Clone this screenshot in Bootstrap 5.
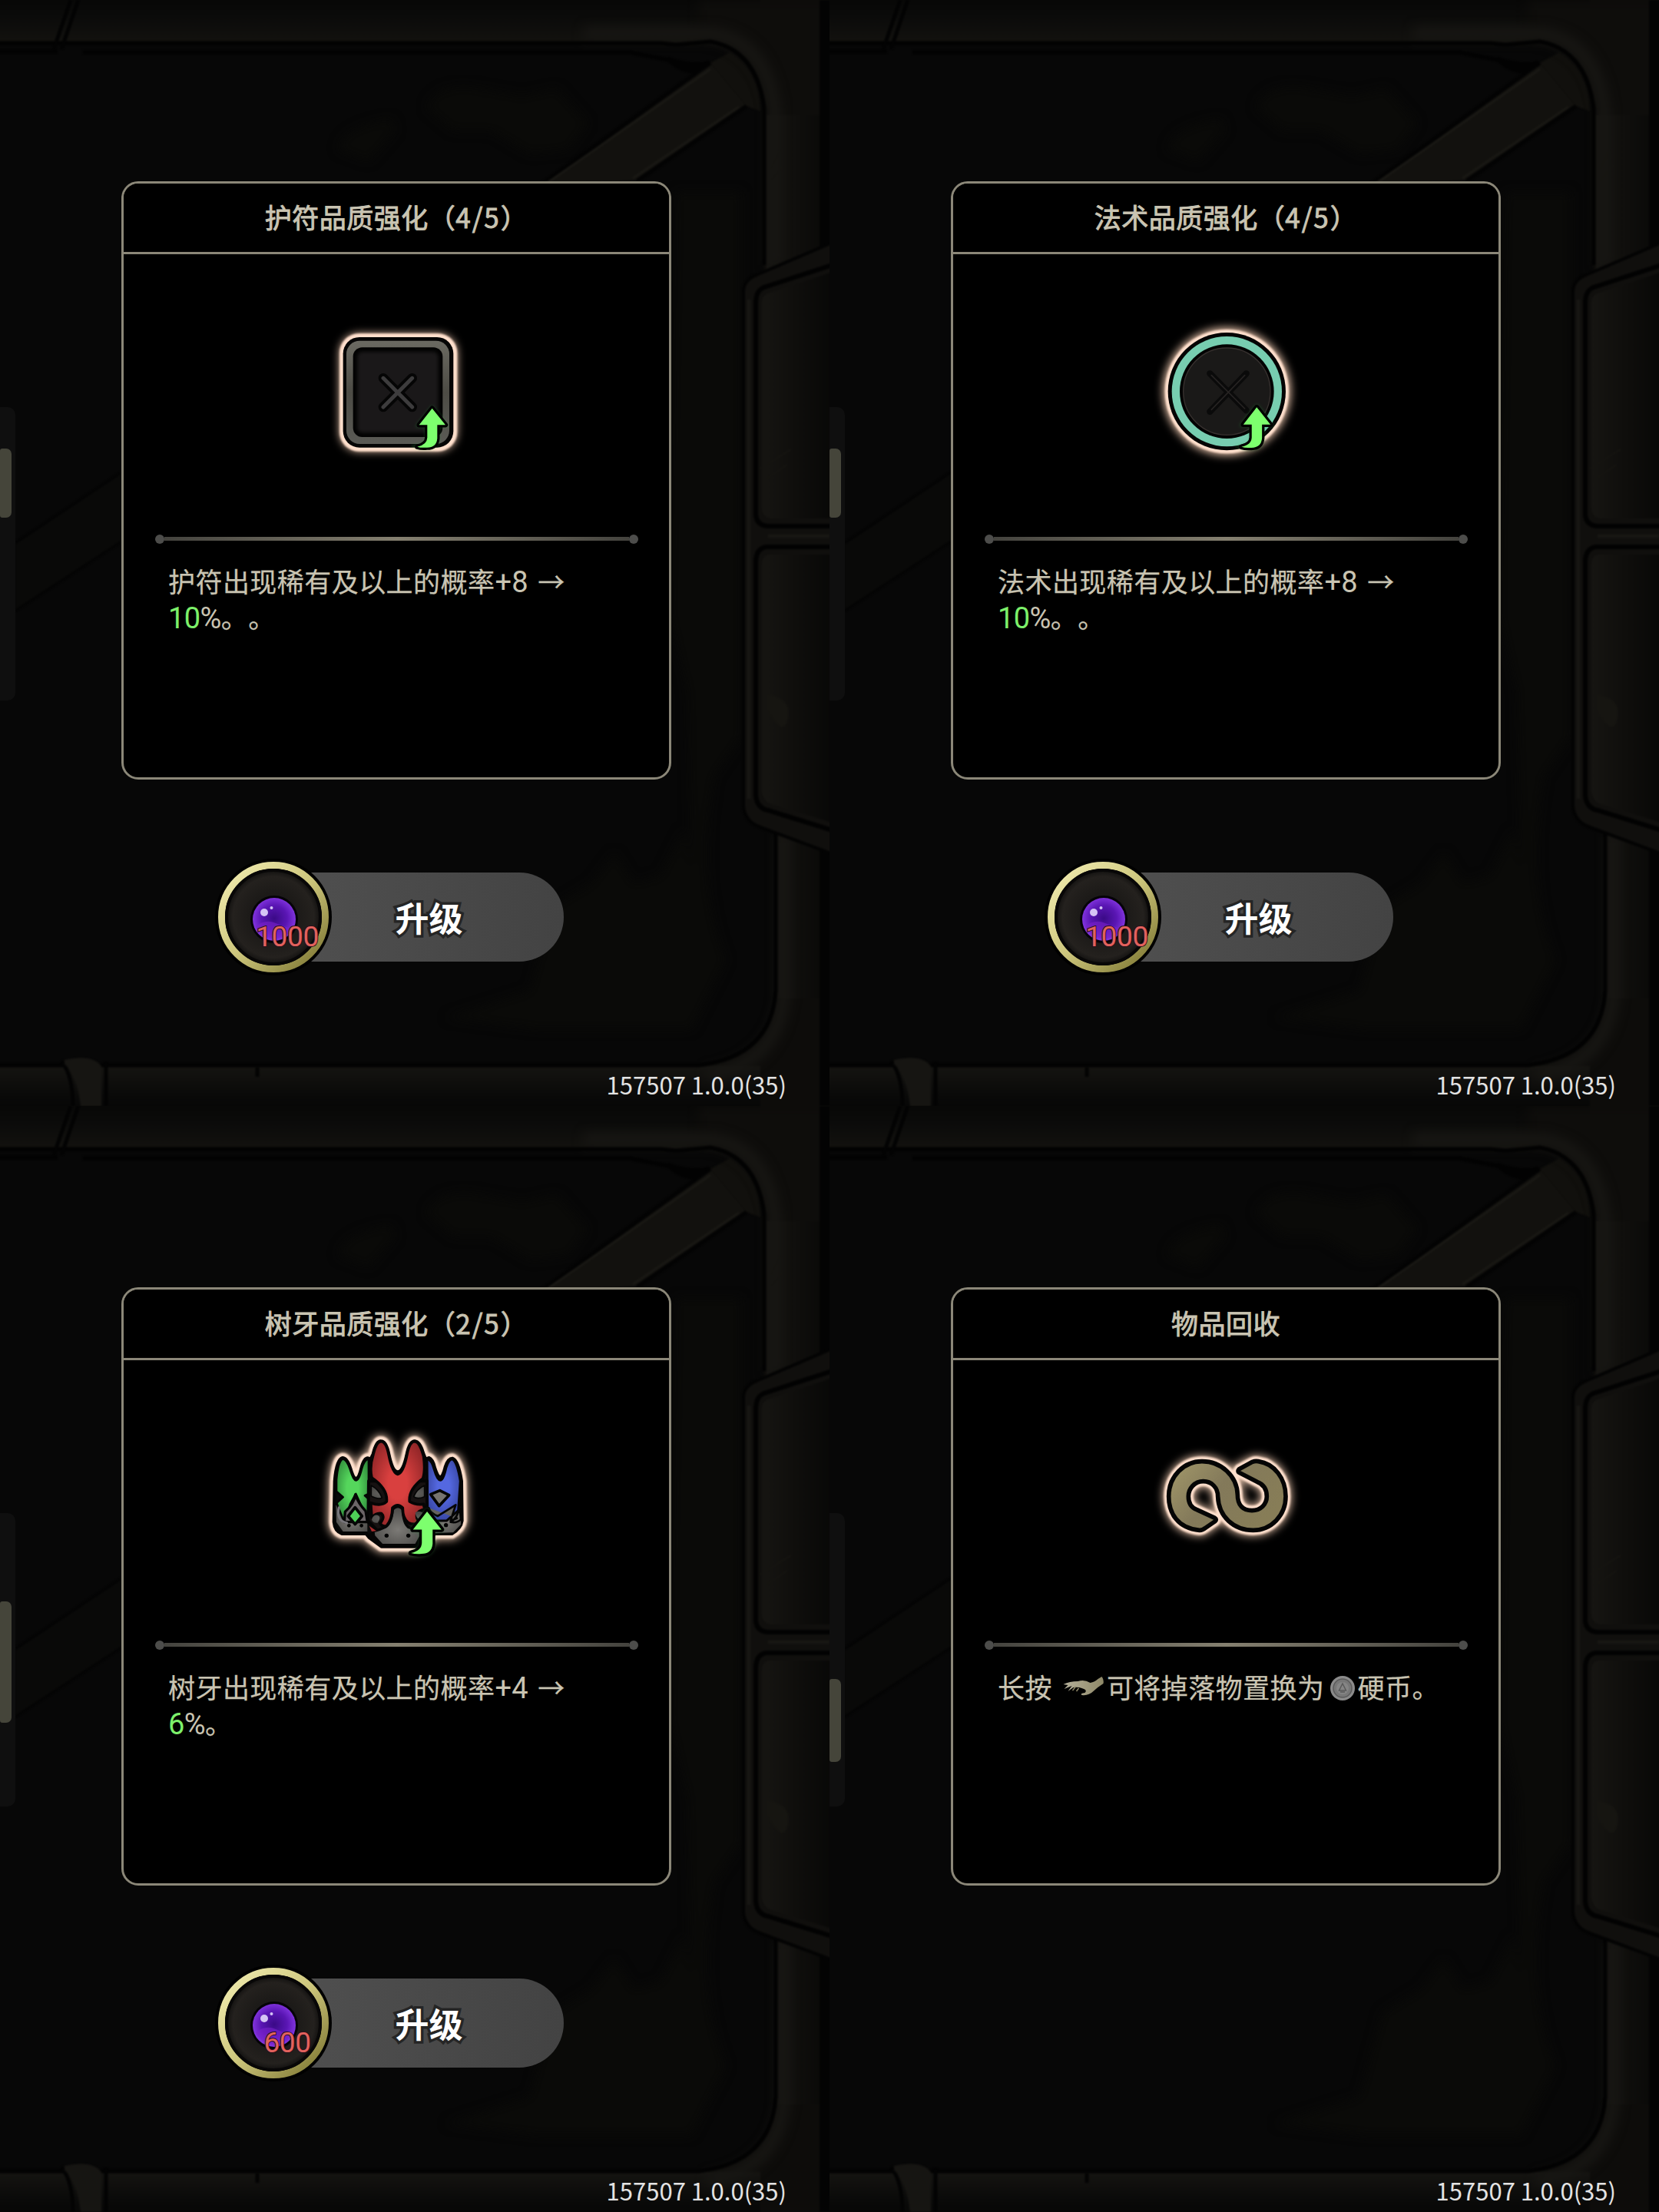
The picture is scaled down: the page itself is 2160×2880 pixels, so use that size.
<!DOCTYPE html>
<html lang="zh-CN">
<head>
    <meta charset="UTF-8">
    <meta name="viewport" content="width=device-width, initial-scale=1">
    <title>升级</title>
    <link href="https://cdn.jsdelivr.net/npm/bootstrap@5.3.0/dist/css/bootstrap.min.css" rel="stylesheet">
    <style>
        body {
            background-color: #070707;
            font-family: "Noto Sans CJK SC", "Noto Sans", sans-serif;
            color: #c9c4b2;
        }
        .screens {
            width: 2160px;
        }
        .screen {
            height: 1440px;
            background: #070707;
        }
        .scene {
            z-index: 0;
        }
        .screen-main {
            z-index: 1;
            padding: 236px 56px 0 138px;
        }
        /* Полоса прокрутки слева */
        .track {
            z-index: 1;
            width: 20px;
            height: 382px;
            margin-top: 530px;
            background: #0f0f0f;
            border-radius: 0 10px 10px 0;
        }
        .thumb {
            width: 15px;
            height: 90px;
            margin-top: 54px;
            background: #45453a;
            border-radius: 3px 7px 7px 3px;
        }
        .thumb-mid {
            height: 158px;
            margin-top: 115px;
        }
        .thumb-low {
            height: 108px;
            margin-top: 216px;
        }
        .item-card {
            --bs-card-bg: #000;
            --bs-card-color: #c9c4b2;
            --bs-card-border-color: #8b8778;
            --bs-card-border-width: 3px;
            --bs-card-border-radius: 22px;
            --bs-card-inner-border-radius: 19px;
            --bs-card-cap-bg: #000;
            width: 716px;
            height: 779px;
        }
        .item-card .card-header {
            height: 92px;
            font-size: 35px;
            line-height: 86px;
            letter-spacing: .5px;
            -webkit-text-stroke: .9px #c9c4b2;
        }
        .title-num {
            letter-spacing: 2px;
        }
        .item-icon {
            width: 240px;
            height: 240px;
            margin-top: 60px;
        }
        .divider {
            height: 13px;
            margin: 64px 40px 0 41px;
        }
        .divider .dot {
            width: 12px;
            height: 12px;
            background: #4d4d4b;
        }
        .divider .rule {
            height: 5px;
            background: linear-gradient(90deg, #44433e, #858070 50%, #44433e);
        }
        .desc {
            margin: 24px 0 0 58px;
            font-size: 35px;
            line-height: 47px;
            letter-spacing: .45px;
            text-spacing-trim: space-all;
            -webkit-text-stroke: .25px #c9c4b2;
        }
        .num {
            font-family: Roboto, "Noto Sans", sans-serif;
            font-size: 38px;
            line-height: 1;
            letter-spacing: -.6px;
            -webkit-text-stroke: 0;
        }
        .gain {
            margin-right: 4px;
            letter-spacing: .3px;
        }
        .up {
            color: #7df06a;
        }
        .upgrade {
            height: 152px;
            margin: 103px 0 0 122px;
        }
        .cost {
            width: 152px;
            height: 152px;
            z-index: 2;
        }
        .btn-upgrade {
            --bs-btn-color: #fff;
            width: 365px;
            height: 116px;
            margin-left: -63px;
            padding: 0 0 0 14px;
            border: 0;
            border-radius: 0 58px 58px 0;
            background: linear-gradient(90deg, #505050, #434343);
            font-size: 44px;
            font-weight: 700;
            color: #fff;
            -webkit-text-stroke: 7px #252525;
            paint-order: stroke fill;
        }
        .version {
            font-size: 31px;
            line-height: 50px;
            color: #e3e3e3;
            margin-bottom: 3px;
        }
        .price {
            font: 400 37px Roboto, "Noto Sans", sans-serif;
            letter-spacing: -.4px;
        }
    </style>
</head>
<body>

    <!-- Общие рисунки -->
    <svg width="0" height="0" class="position-absolute">
        <defs>
            <filter id="glow" x="-30%" y="-30%" width="160%" height="160%" color-interpolation-filters="sRGB"><feGaussianBlur stdDeviation="18"/></filter>
            <filter id="soft" x="-20%" y="-20%" width="140%" height="140%" color-interpolation-filters="sRGB"><feGaussianBlur stdDeviation="7"/></filter>
            <filter id="haze" x="0" y="0" width="100%" height="100%" color-interpolation-filters="sRGB"><feGaussianBlur stdDeviation="1.300"/></filter>
            <filter id="rim" x="-20%" y="-20%" width="140%" height="140%" color-interpolation-filters="sRGB"><feGaussianBlur stdDeviation="2.500"/></filter>
            <linearGradient id="beamTop" x2="0" y2="1"><stop stop-color="#070706"/><stop offset=".45" stop-color="#0b0b0a"/><stop offset="1" stop-color="#13120f"/></linearGradient>
            <linearGradient id="beamBottom" x2="0" y2="1"><stop stop-color="#151411"/><stop offset=".6" stop-color="#0a0a09"/><stop offset="1" stop-color="#050505"/></linearGradient>
            <linearGradient id="beamSide"><stop stop-color="#161512"/><stop offset=".45" stop-color="#0f0e0c"/><stop offset="1" stop-color="#070706"/></linearGradient>
            <linearGradient id="gold" x1="0" y1="0" x2="1" y2="1"><stop stop-color="#f4efb4"/><stop offset=".5" stop-color="#cdc67c"/><stop offset="1" stop-color="#77702c"/></linearGradient>
            <radialGradient id="orb" cx=".5" cy=".48" r=".55"><stop stop-color="#3a0a86"/><stop offset=".55" stop-color="#5a16b4"/><stop offset="1" stop-color="#8b3be8"/></radialGradient>
            <radialGradient id="well"><stop offset=".5" stop-color="#1c1a18"/><stop offset=".85" stop-color="#24211e"/><stop offset="1" stop-color="#100f0e"/></radialGradient>
            <linearGradient id="frame" x2="0" y2="1"><stop stop-color="#6b6a62"/><stop offset=".5" stop-color="#4d4c45"/><stop offset="1" stop-color="#5a5a55"/></linearGradient>
            <radialGradient id="redTooth" cx=".5" cy=".5" r=".6"><stop offset=".3" stop-color="#d9403f"/><stop offset="1" stop-color="#8d2426"/></radialGradient>
            <radialGradient id="greenTooth" cx=".5" cy=".45" r=".6"><stop offset=".3" stop-color="#55d65c"/><stop offset="1" stop-color="#2f8a3b"/></radialGradient>
            <radialGradient id="blueTooth" cx=".5" cy=".45" r=".6"><stop offset=".3" stop-color="#5468e0"/><stop offset="1" stop-color="#35439e"/></radialGradient>
            <radialGradient id="stone" cx=".5" cy=".6" r=".6"><stop stop-color="#7c7a76"/><stop offset="1" stop-color="#4a4947"/></radialGradient>
            <linearGradient id="brass" x2="1" y2=".5"><stop stop-color="#a3996a"/><stop offset=".5" stop-color="#83795a"/><stop offset="1" stop-color="#877d57"/></linearGradient>
            <linearGradient id="skin" x2="1"><stop stop-color="#b5b09a"/><stop offset="1" stop-color="#8f8968"/></linearGradient>
        </defs>

        <!-- Каменная рама и балки -->
        <symbol id="scene" viewBox="0 0 1080 1440">
            <rect width="1080" height="1440" fill="#070707"/>
            <path d="M555 140Q570 105 625 115L680 125 725 115 765 160 740 195 690 200 640 170 590 170ZM440 195Q445 165 510 155L515 170 480 210ZM880 250H965V960L930 1010Q905 1150 945 1250L900 1340H700L580 1325 690 1290 720 1180 770 1150 800 1110 825 1150 860 1140 890 1080 900 1130 895 900 872 800Z" fill="#0a0a08" filter="url(#soft)"/>
            <g filter="url(#haze)">
                <path d="M20 707L158 615V705L20 795Z" fill="#090908"/>
                <path d="M20 707L158 615M20 795L158 705" stroke="#040404" stroke-width="3"/>
                <path d="M705 240L925 82 972 138 828 235Z" fill="#12110e"/>
                <path d="M705 240L925 82M830 235L972 138" stroke="#030303" stroke-width="5"/>
                <path d="M710 240L925 90M824 232L962 139" stroke="#191814" stroke-width="3"/>
                <path d="M925 82L950 68Q988 90 990 145L972 138Z" fill="#11100d"/>
                <path d="M-10 -10H1090V1450H-10V1386H910Q1000 1375 1008 1300V1080L985 1060V360L995 350V140Q985 60 925 55L-10 56Z" fill="#0d0c0a"/>
                <rect x="-10" y="-6" width="1000" height="62" fill="url(#beamTop)"/>
                <rect x="-10" y="1388" width="1000" height="62" fill="url(#beamBottom)"/>
                <path d="M910 0H1090V350H998V140Q985 60 910 52Z" fill="#0e0d0b" filter="url(#soft)"/>
                <path d="M998 150V350H1090V150ZM1012 1080H1090V1300H1012Z" fill="url(#beamSide)"/>
                <path d="M760 44H925Q995 52 1008 140V345M1020 1085V1300Q1010 1385 920 1400" fill="none" stroke="#171613" stroke-width="18" filter="url(#soft)"/>
                <path d="M1080 0V340M1080 1090V1440" stroke="#030303" stroke-width="26"/>
                <path d="M-10 56H860L880 58 925 54Q985 65 995 140V345M-10 67H75M108 68H820L870 78 895 90 922 82M1010 1080V1290Q1005 1375 910 1387H-10" fill="none" stroke="#020202" stroke-width="5"/>
                <path d="M870 74Q895 84 925 80L905 96Q885 95 870 80Z" fill="#020202"/>
                <path d="M70 64L92 0M80 64L102 0M80 1382Q95 1400 95 1440M138 1382V1440M335 1390V1402" fill="none" stroke="#030303" stroke-width="5"/>
                <path d="M84 1380Q120 1372 132 1388V1440H105Q100 1400 84 1385Z" fill="#161512"/>
                <path d="M1090 313L985 358Q968 365 968 380V1050Q970 1070 990 1077L1090 1114Z" fill="#100f0d"/>
                <path d="M1090 313L985 358Q968 365 968 380V1050Q970 1070 990 1077L1090 1114" fill="none" stroke="#030303" stroke-width="4"/>
                <path d="M1090 343L995 374Q984 378 984 395V670Q985 684 1000 685H1090M1090 712H998Q984 714 984 732V1035Q985 1052 1000 1055L1090 1083" fill="none" stroke="#020202" stroke-width="6"/>
                <path d="M1090 352L1000 382Q992 385 992 395V660Q993 675 1005 675H1090ZM1090 722H1000Q992 724 992 737V1030Q995 1045 1005 1047L1090 1073Z" fill="url(#beamSide)"/>
                <path d="M975 390V1040M1000 698H1080" stroke="#171613" stroke-width="5"/>
                <path d="M1000 905Q1030 910 1025 935T1000 925ZM990 610L1030 585M995 625L1025 605M1004 220L1015 195M1004 235L1020 215" fill="#161511" stroke="#161511" stroke-width="2"/>
            </g>
        </symbol>

        <symbol id="orbBadge" viewBox="0 0 152 152">
            <circle cx="76" cy="76" r="76" fill="#000"/>
            <circle cx="76" cy="76" r="62" fill="url(#well)"/>
            <circle cx="76" cy="76" r="67.500" fill="none" stroke="url(#gold)" stroke-width="9"/>
            <circle cx="76" cy="76" r="61" fill="none" stroke="#080707" stroke-width="4"/>
            <circle cx="77" cy="79" r="31" fill="#050308"/>
            <circle cx="77" cy="79" r="28" fill="url(#orb)"/>
            <path d="M53 88Q66 78 79 84T101 90A27 27 0 0 1 53 88Z" fill="#7a22cc" opacity=".6"/>
            <circle cx="64" cy="70" r="5" fill="#d5c4f5"/>
            <circle cx="73.500" cy="64" r="2" fill="#d5c4f5"/>
        </symbol>

        <g id="arrow">
            <path d="M428 338L480 403H448V455Q445 491 408 491Q385 493 370 488Q408 480 409 452V403H377Z" fill="#2dbb4b" stroke="#2dbb4b" stroke-width="14" opacity=".35" filter="url(#soft)"/>
            <path d="M428 338L480 403H448V455Q445 491 408 491Q385 493 370 488Q408 480 409 452V403H377Z" fill="#7dff6e" stroke="#000" stroke-width="19" stroke-linejoin="round" paint-order="stroke"/>
        </g>

        <path id="band" d="M215 367C130 360 95 300 95 235C95 155 155 98 225 98C300 98 362 155 364 228C364 270 385 290 420 290C455 290 478 265 478 235C478 205 465 187 440 178L370 142Q362 136 370 128L422 100Q432 96 445 98C508 107 552 165 552 235C552 310 495 367 425 367C350 367 290 315 287 235C287 200 262 176 230 176C195 176 172 205 172 235C172 265 185 280 205 287L275 319Q285 325 275 333L240 357Q225 368 215 367Z"/>

        <path id="teeth" d="M108 145Q125 145 138 185Q150 225 160 226Q172 226 182 185Q192 145 207 146L218 150 228 130Q240 78 258 80Q278 80 288 130Q303 200 323 200Q345 200 360 130Q370 80 390 80Q410 82 422 125L432 150 445 145Q460 150 468 185Q480 220 490 220Q500 220 510 180Q520 147 537 147Q560 155 572 235L574 390Q570 420 535 440L470 440 400 490H260L212 455 200 440H105Q78 430 75 395L78 235Q85 150 108 145Z"/>
    </svg>

    <div class="screens row g-0">

        <div class="col-6 screen position-relative d-flex overflow-hidden">
            <svg class="scene position-absolute top-0 start-0 w-100 h-100"><use href="#scene"/></svg>
            <div class="track position-relative flex-shrink-0"><div class="thumb float-start"></div></div>
            <div class="screen-main position-relative flex-grow-1 d-flex flex-column">
                <div class="card item-card">
                    <div class="card-header text-center p-0">护符品质强化（<span class="title-num">4/5</span>）</div>
                    <div class="card-body p-0">
                        <svg class="item-icon d-block mx-auto overflow-visible" viewBox="0 0 240 240">
                            <g transform="translate(24 28) scale(.3333)">
                                <rect x="68" y="48" width="456" height="456" rx="74" fill="#f3cdb4" filter="url(#glow)"/>
                                <rect x="66" y="46" width="460" height="460" rx="76" fill="#ffdfcc" filter="url(#rim)"/>
                                <rect x="80" y="60" width="431" height="431" rx="64" fill="#050505"/>
                                <rect x="93" y="74" width="402" height="403" rx="52" fill="url(#frame)"/>
                                <rect x="119" y="100" width="350" height="350" rx="36" fill="#030303"/>
                                <rect x="136" y="117" width="316" height="316" rx="20" fill="#1a1819" filter="url(#soft)"/>
                                <path d="M237 220L350 333M350 220L237 333" stroke="#050505" stroke-width="38" stroke-linecap="round"/>
                                <path d="M237 220L350 333M350 220L237 333" stroke="#3d3c3d" stroke-width="15" stroke-linecap="round"/>
                                <use href="#arrow"/>
                            </g>
                        </svg>
                        <div class="divider d-flex align-items-center"><span class="dot rounded-circle"></span><span class="rule flex-grow-1"></span><span class="dot rounded-circle"></span></div>
                        <div class="desc text-nowrap">护符出现稀有及以上的概率<span class="num gain">+8</span> →<br><span class="num up">10</span><span class="num">%</span>。。</div>
                    </div>
                </div>
                <div class="upgrade d-flex align-items-center">
                    <svg class="cost position-relative overflow-visible"><use href="#orbBadge"/><text class="price" x="94" y="114" text-anchor="middle" fill="#e2625d" stroke="#2a0f1a" stroke-width="2" paint-order="stroke">1000</text></svg>
                    <button type="button" class="btn btn-upgrade">升级</button>
                </div>
                <div class="version mt-auto text-end">157507 1.0.0(35)</div>
            </div>
        </div>

        <div class="col-6 screen position-relative d-flex overflow-hidden">
            <svg class="scene position-absolute top-0 start-0 w-100 h-100"><use href="#scene"/></svg>
            <div class="track position-relative flex-shrink-0"><div class="thumb float-start"></div></div>
            <div class="screen-main position-relative flex-grow-1 d-flex flex-column">
                <div class="card item-card">
                    <div class="card-header text-center p-0">法术品质强化（<span class="title-num">4/5</span>）</div>
                    <div class="card-body p-0">
                        <svg class="item-icon d-block mx-auto overflow-visible" viewBox="0 0 240 240">
                            <g transform="translate(24 19) scale(.3333)">
                                <circle cx="292" cy="299" r="248" fill="#f3cdb4" filter="url(#glow)"/>
                                <circle cx="292" cy="299" r="242" fill="#ffdfcc" filter="url(#rim)"/>
                                <circle cx="292" cy="299" r="230" fill="#040404"/>
                                <circle cx="292" cy="299" r="215" fill="#77cdb0"/>
                                <circle cx="292" cy="299" r="184" fill="#030303"/>
                                <circle cx="292" cy="299" r="170" fill="#1a1918" stroke="#37312f" stroke-width="4"/>
                                <path d="M226 229L368 373M368 229L226 378" stroke="#0a0a0a" stroke-width="25" stroke-linecap="round"/>
                                <path d="M232 236L362 366M362 236L232 370" stroke="#262322" stroke-width="5" stroke-linecap="round"/>
                                <use href="#arrow" transform="translate(-32 13) scale(1.03)"/>
                            </g>
                        </svg>
                        <div class="divider d-flex align-items-center"><span class="dot rounded-circle"></span><span class="rule flex-grow-1"></span><span class="dot rounded-circle"></span></div>
                        <div class="desc text-nowrap">法术出现稀有及以上的概率<span class="num gain">+8</span> →<br><span class="num up">10</span><span class="num">%</span>。。</div>
                    </div>
                </div>
                <div class="upgrade d-flex align-items-center">
                    <svg class="cost position-relative overflow-visible"><use href="#orbBadge"/><text class="price" x="94" y="114" text-anchor="middle" fill="#e2625d" stroke="#2a0f1a" stroke-width="2" paint-order="stroke">1000</text></svg>
                    <button type="button" class="btn btn-upgrade">升级</button>
                </div>
                <div class="version mt-auto text-end">157507 1.0.0(35)</div>
            </div>
        </div>

        <div class="col-6 screen position-relative d-flex overflow-hidden">
            <svg class="scene position-absolute top-0 start-0 w-100 h-100"><use href="#scene"/></svg>
            <div class="track position-relative flex-shrink-0"><div class="thumb thumb-mid float-start"></div></div>
            <div class="screen-main position-relative flex-grow-1 d-flex flex-column">
                <div class="card item-card">
                    <div class="card-header text-center p-0">树牙品质强化（<span class="title-num">2/5</span>）</div>
                    <div class="card-body p-0">
                        <svg class="item-icon d-block mx-auto overflow-visible" viewBox="0 0 240 240">
                            <g transform="translate(14 19) scale(.3333)" stroke-linejoin="round" stroke-linecap="round">
                                <use href="#teeth" fill="#f3cdb4" stroke="#f3cdb4" stroke-width="44" filter="url(#glow)"/>
                                <use href="#teeth" fill="#000" stroke="#ffdfcc" stroke-width="40" filter="url(#rim)"/>
                                <use href="#teeth" fill="#0a0a0a" stroke="#050505" stroke-width="14"/>
                                <!-- зелёный -->
                                <path d="M82 330L84 395 110 432H205V330Z" fill="url(#stone)"/>
                                <path d="M108 148Q125 150 138 190Q150 232 160 232Q172 232 182 190Q192 150 210 148V285L195 292 210 305V400Q195 385 185 340L160 285 138 325 115 395 92 340 85 320 110 298 84 275V230Q90 160 108 148Z" fill="url(#greenTooth)" stroke="#050505" stroke-width="8"/>
                                <path d="M158 288Q168 320 198 352L205 395H115L118 355Q152 325 158 288Z" fill="#6c6568" stroke="#050505" stroke-width="10"/>
                                <path d="M157 338L184 372 157 404 130 372Z" fill="#4ecf57" stroke="#050505" stroke-width="11"/>
                                <path d="M94 338Q82 390 125 398" fill="none" stroke="#77757a" stroke-width="9"/>
                                <circle cx="133" cy="409" r="7"/><circle cx="182" cy="409" r="7"/>
                                <!-- синий -->
                                <path d="M440 330V410L465 438 540 436 570 405V335Z" fill="url(#stone)"/>
                                <path d="M438 148Q456 152 466 190Q478 232 490 232Q502 232 512 185Q522 150 537 149Q556 160 568 235L560 350 515 390H455L440 340Z" fill="url(#blueTooth)" stroke="#050505" stroke-width="9"/>
                                <path d="M452 287L488 272 524 290 485 332Z" fill="#77746f" stroke="#050505" stroke-width="11"/>
                                <path d="M565 330Q560 380 530 395Q555 400 570 385ZM445 340Q450 360 480 372L550 328 530 390 555 380" fill="#64625f" stroke="#050505" stroke-width="8"/>
                                <circle cx="512" cy="407" r="8"/>
                                <!-- красный -->
                                <path d="M210 235H438V440L395 488H262L215 450 240 425 208 390Z" fill="#161111" stroke="#050505" stroke-width="12"/>
                                <path d="M228 432Q255 425 275 415Q300 400 304 345Q325 325 343 345Q345 400 365 415L422 435 395 485H262L230 450Z" fill="url(#stone)" stroke="#050505" stroke-width="10"/>
                                <path d="M258 80Q278 80 288 130Q303 206 323 208Q345 206 360 130Q370 80 390 80Q410 82 425 140Q432 195 422 225Q365 268 370 315Q395 330 425 325L428 345Q405 350 398 365Q395 385 412 395Q390 410 365 398Q342 380 343 340Q323 320 303 340Q302 385 280 410Q262 415 255 400Q275 375 260 362Q240 358 222 378L218 320Q260 335 280 315Q285 265 222 222Q212 180 228 130Q240 80 258 80Z" fill="url(#redTooth)" stroke="#050505" stroke-width="11"/>
                                <path d="M220 252Q250 268 262 300Q250 308 220 294ZM428 252Q398 266 386 296Q400 308 428 296Z" fill="url(#stone)" stroke="#050505" stroke-width="5"/>
                                <path d="M222 385Q228 365 245 368Q262 375 245 398Q225 400 222 385M392 358Q405 350 420 358L415 385Q395 385 392 358" fill="url(#stone)"/>
                                <path d="M212 410L240 430 222 432Z" fill="#a52c2d"/>
                                <circle cx="280" cy="448" r="8"/><circle cx="365" cy="448" r="8"/>
                                <use href="#arrow" transform="translate(-24 -11) scale(1.08)"/>
                            </g>
                        </svg>
                        <div class="divider d-flex align-items-center"><span class="dot rounded-circle"></span><span class="rule flex-grow-1"></span><span class="dot rounded-circle"></span></div>
                        <div class="desc text-nowrap">树牙出现稀有及以上的概率<span class="num gain">+4</span> →<br><span class="num up">6</span><span class="num">%</span>。</div>
                    </div>
                </div>
                <div class="upgrade d-flex align-items-center">
                    <svg class="cost position-relative overflow-visible"><use href="#orbBadge"/><text class="price" x="94" y="114" text-anchor="middle" fill="#e2625d" stroke="#2a0f1a" stroke-width="2" paint-order="stroke">600</text></svg>
                    <button type="button" class="btn btn-upgrade">升级</button>
                </div>
                <div class="version mt-auto text-end">157507 1.0.0(35)</div>
            </div>
        </div>

        <div class="col-6 screen position-relative d-flex overflow-hidden">
            <svg class="scene position-absolute top-0 start-0 w-100 h-100"><use href="#scene"/></svg>
            <div class="track position-relative flex-shrink-0"><div class="thumb thumb-low float-start"></div></div>
            <div class="screen-main position-relative flex-grow-1 d-flex flex-column">
                <div class="card item-card">
                    <div class="card-header text-center p-0">物品回收</div>
                    <div class="card-body p-0">
                        <svg class="item-icon d-block mx-auto overflow-visible" viewBox="0 0 240 240">
                            <g transform="translate(14 39) scale(.3333)" stroke-linejoin="round">
                                <use href="#band" fill="#f3cdb4" stroke="#f3cdb4" stroke-width="42" filter="url(#glow)"/>
                                <use href="#band" fill="none" stroke="#ffdfcc" stroke-width="38" filter="url(#rim)"/>
                                <use href="#band" fill="url(#brass)" stroke="#050505" stroke-width="17"/>
                            </g>
                        </svg>
                        <div class="divider d-flex align-items-center"><span class="dot rounded-circle"></span><span class="rule flex-grow-1"></span><span class="dot rounded-circle"></span></div>
                        <div class="desc text-nowrap">长按<svg width="71" height="34" viewBox="0 0 70 34" style="vertical-align: -4px">
                                <path d="M14 12Q22 8 33 8Q41 5 49 10Q55 9 59 5L64 2Q67 6 66 11Q58 16 53 21Q47 27 38 26Q35 24 42 23Q46 19 38 17Q33 15 27 16L20 21 25 14 15 18 20 13Z" fill="url(#skin)"/>
                                <path d="M26 20L30 15M31 21L34 17" stroke="#8f8968" stroke-width="1.500"/>
                            </svg>可将掉落物置换为<svg width="43" height="34" viewBox="0 0 43 34" style="vertical-align: -4px">
                                <circle cx="23" cy="17" r="16" fill="#8b8b8b"/>
                                <circle cx="23" cy="17" r="12" fill="#777" stroke="#5b5b5b" stroke-width="1.500"/>
                                <circle cx="23" cy="17" r="8" fill="#858585"/>
                                <path d="M23 11L27.500 20H18.500ZM20 22H26" fill="none" stroke="#5a5a5a" stroke-width="1.500"/>
                            </svg>硬币。</div>
                    </div>
                </div>
                <div class="version mt-auto text-end">157507 1.0.0(35)</div>
            </div>
        </div>

    </div>

    <script src="https://cdn.jsdelivr.net/npm/bootstrap@5.3.0/dist/js/bootstrap.bundle.min.js"></script>
</body>
</html>
